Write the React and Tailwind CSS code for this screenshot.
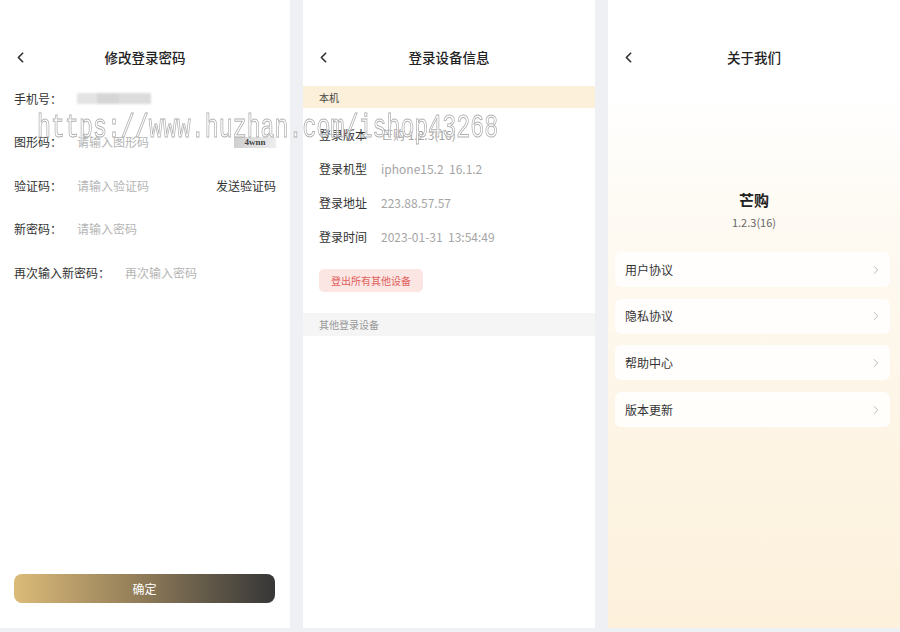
import { ChevronLeft, ChevronRight } from "lucide-react";

const font = { fontFamily: '"Noto Sans CJK SC", "Noto Sans", sans-serif' };

function Header({ title }) {
  return (
    <div className="flex h-[20px] items-center px-[12px]">
      <ChevronLeft size={17} strokeWidth={2.4} className="text-[#333]" />
      <div className="flex-1 text-center text-[13.5px] font-medium leading-[20px] text-[#222]">{title}</div>
      <div className="w-[17px]" />
    </div>
  );
}

function FormRow({ label, children }) {
  return (
    <div className="flex h-[43.5px] items-center px-[14px] text-[12px]">
      <span className="mr-[15px] text-[#333]">{label}</span>
      {children}
    </div>
  );
}

function PasswordPanel() {
  return (
    <div className="flex h-[628px] w-[290px] flex-col bg-white">
      <div className="h-[77px] pt-[47px]">
        <Header title="修改登录密码" />
      </div>
      <FormRow label="手机号：">
        <div className="flex h-[11px] w-[74px] blur-[1px]">
          <div className="w-[20px] bg-[#e4e4e4]" />
          <div className="w-[22px] bg-[#d6d6d6]" />
          <div className="w-[32px] bg-[#dcdcdc]" />
        </div>
      </FormRow>
      <FormRow label="图形码：">
        <span className="flex-1 text-[#b5b5b5]">请输入图形码</span>
        <div
          className="flex h-[11px] w-[42px] items-center justify-center bg-gradient-to-r from-[#cfcfcf] to-[#eeeeee] text-[9px] font-bold leading-none text-[#444]"
          style={{ fontFamily: '"Liberation Serif", serif' }}
        >
          4wnn
        </div>
      </FormRow>
      <FormRow label="验证码：">
        <span className="flex-1 text-[#b5b5b5]">请输入验证码</span>
        <span className="text-[#333]">发送验证码</span>
      </FormRow>
      <FormRow label="新密码：">
        <span className="text-[#b5b5b5]">请输入密码</span>
      </FormRow>
      <FormRow label="再次输入新密码：">
        <span className="text-[#b5b5b5]">再次输入密码</span>
      </FormRow>
      <div className="mt-auto mb-[25px] ml-[14px] flex h-[29px] w-[261px] items-center justify-center rounded-[8px] bg-gradient-to-r from-[#dcbb78] via-[#8e7a57] to-[#373737] text-[12px] text-white">
        确定
      </div>
    </div>
  );
}

function InfoRow({ label, value }) {
  return (
    <div className="flex h-[34px] items-center px-[16px] text-[12px]">
      <span className="mr-[14px] text-[#333]">{label}</span>
      <span className="whitespace-pre text-[#a5a5a5]">{value}</span>
    </div>
  );
}

function DevicePanel() {
  return (
    <div className="flex h-[628px] w-[292px] flex-col bg-white">
      <div className="h-[86px] pt-[47px]">
        <Header title="登录设备信息" />
      </div>
      <div className="flex h-[22px] items-center bg-[#fdf0da] px-[16px] text-[10px] text-[#444]">本机</div>
      <div className="pt-[10px]">
        <InfoRow label="登录版本" value="芒购 1.2.3(16)" />
        <InfoRow label="登录机型" value="iphone15.2  16.1.2" />
        <InfoRow label="登录地址" value="223.88.57.57" />
        <InfoRow label="登录时间" value="2023-01-31  13:54:49" />
        <div className="px-[16px] pt-[12px] pb-[21px]">
          <div className="inline-flex h-[23px] items-center rounded-[5px] bg-[#fce6e4] px-[12px] text-[10px] text-[#e0605c]">
            登出所有其他设备
          </div>
        </div>
      </div>
      <div className="flex h-[23px] items-center bg-[#f5f5f6] px-[16px] text-[10px] text-[#999]">其他登录设备</div>
    </div>
  );
}

function LinkCard({ label }) {
  return (
    <div className="flex h-[35px] items-center justify-between rounded-[6px] bg-white/85 pl-[10px] pr-[7px] text-[12px] text-[#333]">
      <span>{label}</span>
      <ChevronRight size={14} strokeWidth={1.4} className="text-[#aaa]" />
    </div>
  );
}

function AboutPanel() {
  return (
    <div className="flex h-[628px] w-[292px] flex-col bg-[linear-gradient(180deg,#ffffff_0px,#ffffff_92px,#fefaf3_220px,#fdf4e4_450px,#fdf1dc_100%)]">
      <div className="h-[76px] pt-[47px]">
        <Header title="关于我们" />
      </div>
      <div className="mt-[113px] text-center text-[15px] font-bold leading-[22px] text-[#222]">芒购</div>
      <div className="mt-[3px] text-center text-[11px] leading-[16px] text-[#666]">1.2.3(16)</div>
      <div className="mt-[22px] flex flex-col gap-[11.7px] pl-[7px] pr-[10px]">
        <LinkCard label="用户协议" />
        <LinkCard label="隐私协议" />
        <LinkCard label="帮助中心" />
        <LinkCard label="版本更新" />
      </div>
    </div>
  );
}

export default function App() {
  return (
    <div className="relative h-[632px] w-[900px] overflow-hidden bg-[#eff0f4]" style={font}>
      <div className="flex gap-[13px]">
        <PasswordPanel />
        <DevicePanel />
        <AboutPanel />
      </div>
      <div
        aria-hidden="true"
        className="pointer-events-none absolute left-[37px] top-[108px] origin-left scale-x-[0.685] whitespace-nowrap text-[34px] leading-[40px] text-white/60 [-webkit-text-stroke:1px_#b0b0b0]"
        style={{ fontFamily: '"Liberation Mono", monospace' }}
      >
        https://www.huzhan.com/ishop43268
      </div>
    </div>
  );
}
